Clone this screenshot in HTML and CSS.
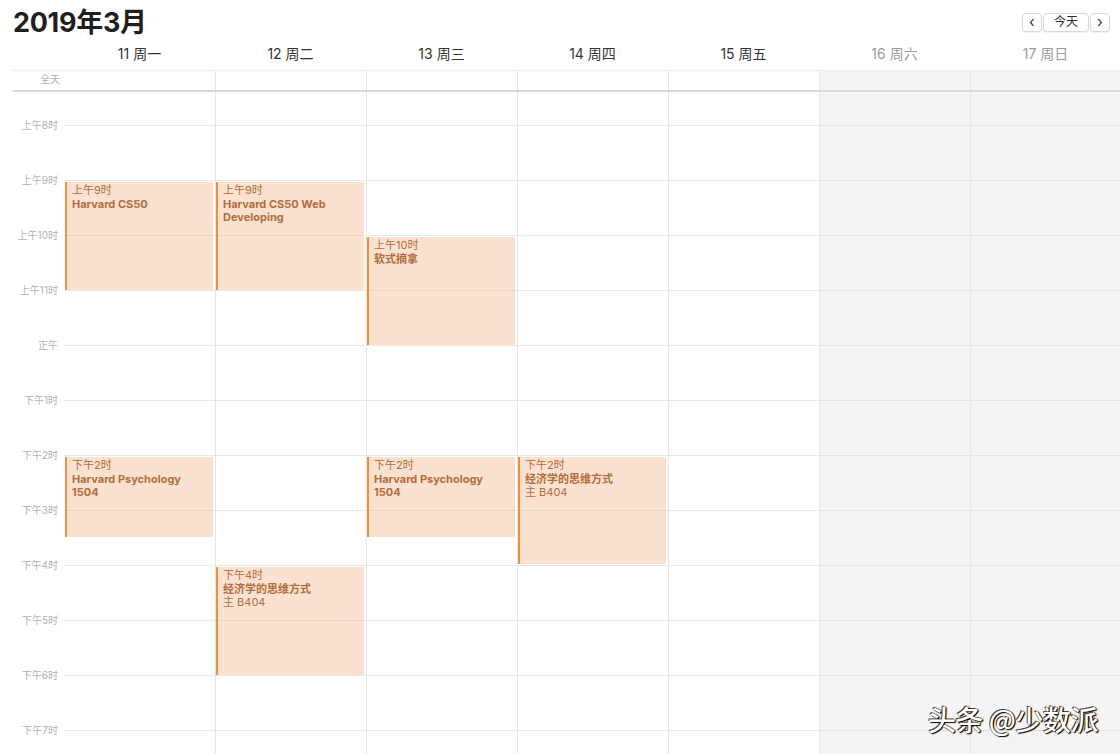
FILE: index.html
```html
<!DOCTYPE html>
<html>
<head>
    <meta charset="utf-8">
    <link rel="stylesheet" href="styles.css">
</head>
<body>
    <div class="calendar">
        <div class="toolbar">
            <h1 class="month-title">2019年3月</h1>
            <div class="nav">
                <button class="nav-btn arrow">&#8249;</button>
                <button class="nav-btn today">今天</button>
                <button class="nav-btn arrow">&#8250;</button>
            </div>
        </div>

        <!-- day names -->
        <div class="row day-head">
            <div class="gutter"></div>
            <div class="day-name">11 周一</div>
            <div class="day-name">12 周二</div>
            <div class="day-name">13 周三</div>
            <div class="day-name">14 周四</div>
            <div class="day-name">15 周五</div>
            <div class="day-name off">16 周六</div>
            <div class="day-name off">17 周日</div>
        </div>

        <!-- all day row -->
        <div class="row allday">
            <div class="gutter"><div class="hour-label">全天</div></div>
            <div class="cell first"></div>
            <div class="cell"></div>
            <div class="cell"></div>
            <div class="cell"></div>
            <div class="cell"></div>
            <div class="cell weekend"></div>
            <div class="cell weekend"></div>
        </div>

        <!-- hours -->
        <div class="row timeline">
            <div class="gutter hours">
                <div class="hour-label">上午8时</div>
                <div class="hour-label">上午9时</div>
                <div class="hour-label">上午10时</div>
                <div class="hour-label">上午11时</div>
                <div class="hour-label">正午</div>
                <div class="hour-label">下午1时</div>
                <div class="hour-label">下午2时</div>
                <div class="hour-label">下午3时</div>
                <div class="hour-label">下午4时</div>
                <div class="hour-label">下午5时</div>
                <div class="hour-label">下午6时</div>
                <div class="hour-label">下午7时</div>
            </div>

            <div class="day first">
                <div class="event" style="top: 90px; height: 108px;">
                    <div class="ev-time">上午9时</div>
                    <div class="ev-title">Harvard CS50</div>
                </div>
                <div class="event" style="top: 365px; height: 80px;">
                    <div class="ev-time">下午2时</div>
                    <div class="ev-title">Harvard Psychology 1504</div>
                </div>
            </div>

            <div class="day">
                <div class="event" style="top: 90px; height: 108px;">
                    <div class="ev-time">上午9时</div>
                    <div class="ev-title">Harvard CS50 Web Developing</div>
                </div>
                <div class="event" style="top: 475px; height: 108px;">
                    <div class="ev-time">下午4时</div>
                    <div class="ev-title">经济学的思维方式</div>
                    <div class="ev-place">主 B404</div>
                </div>
            </div>

            <div class="day">
                <div class="event" style="top: 145px; height: 108px;">
                    <div class="ev-time">上午10时</div>
                    <div class="ev-title">软式摘拿</div>
                </div>
                <div class="event" style="top: 365px; height: 80px;">
                    <div class="ev-time">下午2时</div>
                    <div class="ev-title">Harvard Psychology 1504</div>
                </div>
            </div>

            <div class="day">
                <div class="event" style="top: 365px; height: 107px;">
                    <div class="ev-time">下午2时</div>
                    <div class="ev-title">经济学的思维方式</div>
                    <div class="ev-place">主 B404</div>
                </div>
            </div>

            <div class="day"></div>
            <div class="day weekend"></div>
            <div class="day weekend"></div>
        </div>
    </div>

    <div class="watermark">头条 @少数派</div>
</body>
</html>
```

FILE: styles.css
```css
html, body {
    margin: 0;
    height: 100%;
    overflow: hidden;
}

body {
    font-family: 'Inter', 'Noto Sans CJK SC', sans-serif;
    background-color: #ffffff;
    color: #222222;
}

.calendar {
    padding-left: 12px;
    width: 1109px;
}

/* ===== barra superior ===== */
.toolbar {
    display: flex;
    align-items: center;
    justify-content: space-between;
    height: 44px;
    padding-right: 11px;
}

.month-title {
    margin: 0 0 0 1px;
    font-size: 27px;
    font-weight: 700;
    line-height: 1;
    color: #1f1f1f;
    letter-spacing: -0.3px;
}

.nav {
    display: flex;
    gap: 1px;
}

.nav-btn {
    height: 19px;
    padding: 0;
    border: 1px solid #d8d8d8;
    border-radius: 4px;
    background: #ffffff;
    box-shadow: 0 1px 1px rgba(0, 0, 0, 0.06);
    font-family: 'Inter', 'Noto Sans CJK SC', sans-serif;
    font-size: 12px;
    line-height: 16px;
    color: #333333;
}

.nav-btn.arrow {
    width: 20px;
    font-size: 15px;
    line-height: 14px;
}

.nav-btn.today {
    width: 46px;
}

/* ===== filas ===== */
.row {
    display: flex;
}

.gutter {
    flex: 0 0 52px;
    box-sizing: border-box;
    padding-right: 5px;
    text-align: right;
}

.hour-label {
    font-size: 10px;
    line-height: 12px;
    color: #b0b0b0;
}

.day-head {
    height: 26px;
}

.day-name {
    flex: 0 0 151px;
    text-align: center;
    font-size: 14px;
    line-height: 20px;
    color: #333333;
}

.day-name.off {
    color: #9b9b9b;
}

.allday {
    height: 19px;
    border-top: 1px solid #ececec;
    border-bottom: 2px solid #dadada;
}

.allday .gutter {
    padding-top: 2px;
    padding-right: 4px;
}

.cell {
    flex: 0 0 150px;
    border-left: 1px solid #e6e6e6;
}

.cell.first,
.day.first {
    border-left-color: transparent;
}

.cell.weekend {
    background-color: #f4f4f4;
}

/* ===== horas ===== */
.timeline {
    height: 662px;
}

.hours {
    padding-top: 27px;
    padding-right: 6px;
}

.hours .hour-label {
    height: 55px;
}

.day {
    position: relative;
    flex: 0 0 150px;
    border-left: 1px solid #e6e6e6;
    background-image: linear-gradient(#e9e9e9 1px, transparent 1px);
    background-size: 100% 55px;
    background-position: 0 33px;
}

.day.weekend {
    background-color: #f4f4f4;
    background-image: linear-gradient(#e4e4e4 1px, transparent 1px);
}

/* ===== eventos ===== */
.event {
    position: absolute;
    left: 0;
    right: 2px;
    box-sizing: border-box;
    padding: 2px 9px 0 5px;
    background-color: rgba(245, 178, 132, 0.38);
    border-left: 2px solid #ef8f43;
    font-size: 11px;
    line-height: 13.5px;
    color: #b16d3c;
    overflow: hidden;
}

.ev-title {
    font-weight: 700;
}

/* ===== marca de agua ===== */
.watermark {
    position: absolute;
    right: 22px;
    bottom: 18px;
    font-family: 'Noto Sans CJK SC', sans-serif;
    font-size: 28px;
    font-weight: 500;
    line-height: 34px;
    color: #ffffff;
    text-shadow: 1px 1px 1px #000000, -1px -1px 0 #444444, 1px 0 1px #222222;
    letter-spacing: -0.5px;
}
```
